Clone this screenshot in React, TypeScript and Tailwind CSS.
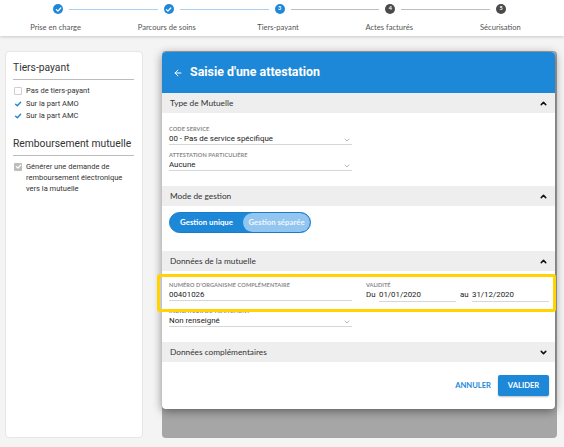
import React from "react";
import { ArrowLeft, ChevronDown, ChevronUp } from "lucide-react";

const Check = ({ color = "#fff", size = 7 }: { color?: string; size?: number }) => (
  <svg width={size} height={size} viewBox="0 0 10 10">
    <path d="M2 5.2 L4.2 7.3 L8.2 2.8" fill="none" stroke={color} strokeWidth="1.8" strokeLinecap="round" strokeLinejoin="round" />
  </svg>
);

const steps = ["Prise en charge", "Parcours de soins", "Tiers-payant", "Actes facturés", "Sécurisation"];

function Stepper() {
  const circle = (i: number) => {
    if (i < 2)
      return (
        <div key={"c" + i} className="w-[10px] h-[10px] rounded-full bg-[#1e88d8] flex items-center justify-center shrink-0">
          <Check size={7} />
        </div>
      );
    return (
      <div
        key={"c" + i}
        className={`w-[10px] h-[10px] rounded-full flex items-center justify-center shrink-0 text-white text-[5.5px] font-bold leading-none ${
          i === 2 ? "bg-[#1e88d8]" : "bg-[#4a4a4a]"
        }`}
      >
        {i + 1}
      </div>
    );
  };
  const items: React.ReactNode[] = [];
  for (let i = 0; i < 5; i++) {
    items.push(circle(i));
    if (i < 4)
      items.push(
        <div key={"l" + i} className={`flex-1 h-px mx-[6px] ${i < 2 ? "bg-[#a9d0f0]" : "bg-[#bdbdbd]"}`} />
      );
  }
  return (
    <div className="h-[36px] bg-white shadow-[0_1px_3px_rgba(0,0,0,0.18)] relative z-10 font-['Lato',sans-serif]">
      <div className="flex items-center pl-[53px] pr-[58px] pt-[4px] h-[10px] box-content">{items}</div>
      <div className="grid grid-cols-5 pl-[0px] pr-[8px] mt-[8px]">
        {steps.map((s) => (
          <div key={s} className="text-center text-[7.6px] leading-[10px] text-[#555]">
            {s}
          </div>
        ))}
      </div>
    </div>
  );
}

function Box({ state }: { state: "off" | "on" | "disabled" }) {
  if (state === "off") return <div className="w-[8px] h-[8px] border border-[#cfcfcf] rounded-[1px] bg-white shrink-0" />;
  if (state === "on")
    return (
      <div className="w-[8px] h-[8px] flex items-center justify-center shrink-0">
        <Check color="#1e88d8" size={8} />
      </div>
    );
  return (
    <div className="w-[8px] h-[8px] rounded-[1px] bg-[#bdbdbd] flex items-center justify-center shrink-0">
      <Check size={7} />
    </div>
  );
}

function LeftCard() {
  return (
    <div className="ml-[5px] w-[138px] h-[387px] bg-white border border-[#e6e6e6] rounded-[4px] px-[7px] pt-[9px] font-['Roboto',sans-serif] text-[#333]">
      <div className="text-[10.3px] leading-[14px]">Tiers-payant</div>
      <div className="h-px bg-[#bcbcbc] mt-[4px] mr-[1px]" />
      <div className="mt-[5px] flex flex-col gap-[0.5px] pl-[1px]">
        {[
          ["Pas de tiers-payant", "off"],
          ["Sur la part AMO", "on"],
          ["Sur la part AMC", "on"],
        ].map(([t, s]) => (
          <div key={t} className="flex items-center gap-[4px] h-[12px] text-[7.5px]">
            <Box state={s as "off" | "on"} />
            <span>{t}</span>
          </div>
        ))}
      </div>
      <div className="text-[10.3px] leading-[14px] mt-[15px]">Remboursement mutuelle</div>
      <div className="h-px bg-[#bcbcbc] mt-[4px] mr-[1px]" />
      <div className="mt-[5px] flex gap-[4px] pl-[1px] text-[7.5px] leading-[11px]">
        <div className="pt-[1.5px]">
          <Box state="disabled" />
        </div>
        <span>
          Générer une demande de
          <br />
          remboursement électronique
          <br />
          vers la mutuelle
        </span>
      </div>
    </div>
  );
}

function SectionHeader({ title, open = true }: { title: string; open?: boolean }) {
  return (
    <div className="h-[20px] bg-[#eeeeee] flex items-center justify-between pl-[8px] pr-[7px] font-['Lato',sans-serif] text-[8.3px] text-[#333]">
      <span>{title}</span>
      {open ? <ChevronUp size={9} strokeWidth={4} color="#111" /> : <ChevronDown size={9} strokeWidth={4} color="#111" />}
    </div>
  );
}

function Field({ label, value, select = true, className = "" }: { label: string; value: string; select?: boolean; className?: string }) {
  return (
    <div className={`w-[183px] ${className}`}>
      <div className="h-[8px] leading-[8px] text-[5.6px] font-bold tracking-[0.1px] text-[#8a8a8a] uppercase font-['Lato',sans-serif]">
        {label}
      </div>
      <div className="h-[12px] flex items-center justify-between border-b border-[#d6d6d6] text-[7.9px] text-[#222] font-['Roboto',sans-serif]">
        <span>{value}</span>
        {select && <ChevronDown size={8} strokeWidth={1.6} color="#777" className="mr-[1px] mt-[3px]" />}
      </div>
    </div>
  );
}

function Modal() {
  return (
    <div className="absolute left-0 top-[1px] w-[393px] h-[357px] bg-white rounded-[4px] shadow-[0_2px_10px_rgba(0,0,0,0.45)] overflow-hidden flex flex-col">
      <div className="h-[41px] bg-[#1e88d8] flex items-center pl-[11px] gap-[7px] text-white shrink-0">
        <ArrowLeft size={10} strokeWidth={2.4} />
        <span className="font-['Roboto',sans-serif] font-bold text-[12.4px]">Saisie d'une attestation</span>
      </div>
      <SectionHeader title="Type de Mutuelle" />
      <div className="pl-[7px] pt-[12px] pb-[15px] flex flex-col gap-[6px]">
        <Field label="Code service" value="00 - Pas de service spécifique" />
        <Field label="Attestation particulière" value="Aucune" />
      </div>
      <SectionHeader title="Mode de gestion" />
      <div className="pl-[7px] pt-[6px] pb-[18px]">
        <div className="w-[142px] h-[21px] rounded-full bg-[#1e88d8] border border-[#1a7cc6] flex items-center font-['Lato',sans-serif] font-bold text-[7.8px] text-white overflow-hidden">
          <div className="w-[73px] h-full flex items-center justify-center">Gestion unique</div>
          <div className="flex-1 h-full rounded-full bg-[#92c5ef] flex items-center justify-center text-[#eef6fd]">Gestion séparée</div>
        </div>
      </div>
      <SectionHeader title="Données de la mutuelle" />
      <div className="pl-[7px] pt-[10px] pb-[15px] flex flex-col gap-[6px]">
        <div className="flex">
          <Field label="Numéro d'organisme complémentaire" value="00401026" select={false} />
          <div className="ml-[14px]">
            <div className="h-[8px] leading-[8px] text-[5.6px] font-bold text-[#8a8a8a] font-['Lato',sans-serif]">VALIDITÉ</div>
            <div className="flex items-end h-[12px] text-[7.9px] text-[#222] font-['Roboto',sans-serif]">
              <span className="w-[13px] h-[12px] leading-[12px]">Du</span>
              <div className="w-[77px] h-[12px] leading-[12px] border-b border-[#d6d6d6] box-content -mb-px">01/01/2020</div>
              <span className="w-[16px] pl-[4px] h-[12px] leading-[12px]">au</span>
              <div className="w-[77px] h-[12px] leading-[12px] border-b border-[#d6d6d6] box-content -mb-px">31/12/2020</div>
            </div>
          </div>
        </div>
        <Field label="Indicateur de traitement" value="Non renseigné" />
      </div>
      <SectionHeader title="Données complémentaires" open={false} />
      <div className="flex-1 flex items-center justify-end pr-[6px] gap-[7px]">
        <span className="font-['Lato',sans-serif] font-bold text-[7.6px] text-[#1e88d8]">ANNULER</span>
        <div className="w-[51px] h-[21px] bg-[#1e88d8] rounded-[2px] shadow-[0_1px_2px_rgba(0,0,0,0.25)] flex items-center justify-center font-['Lato',sans-serif] font-bold text-[7.6px] text-white">
          VALIDER
        </div>
      </div>
    </div>
  );
}

export default function App() {
  return (
    <div className="w-[564px] h-[447px] bg-[#f4f4f4] overflow-hidden relative">
      <Stepper />
      <div className="flex mt-[15px]">
        <LeftCard />
        <div className="relative ml-[19px] w-[395px] h-[387px] bg-[#a6a6a6] rounded-[4px]">
          <Modal />
        </div>
      </div>
      <div className="absolute left-[157px] top-[274px] w-[399px] h-[38px] border-[3px] border-[#ffd400] rounded-[3px]" />
    </div>
  );
}
